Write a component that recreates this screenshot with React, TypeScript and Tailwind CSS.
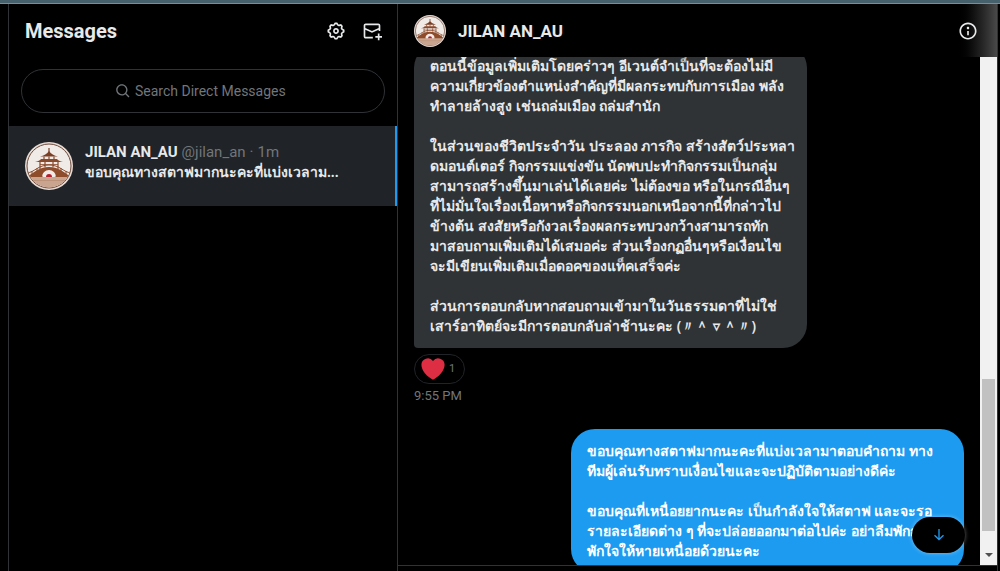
import { ReactNode } from "react";

const INCOMING = [
  "ตอนนี้ข้อมูลเพิ่มเติมโดยคร่าวๆ อีเวนต์จำเป็นที่จะต้องไม่มี",
  "ความเกี่ยวข้องตำแหน่งสำคัญที่มีผลกระทบกับการเมือง พลัง",
  "ทำลายล้างสูง เช่นถล่มเมือง ถล่มสำนัก",
  "",
  "ในส่วนของชีวิตประจำวัน ประลอง ภารกิจ สร้างสัตว์ประหลา",
  "ดมอนต์เตอร์ กิจกรรมแข่งขัน นัดพบปะทำกิจกรรมเป็นกลุ่ม",
  "สามารถสร้างขึ้นมาเล่นได้เลยค่ะ ไม่ต้องขอ หรือในกรณีอื่นๆ",
  "ที่ไม่มั่นใจเรื่องเนื้อหาหรือกิจกรรมนอกเหนือจากนี้ที่กล่าวไป",
  "ข้างต้น สงสัยหรือกังวลเรื่องผลกระทบวงกว้างสามารถทัก",
  "มาสอบถามเพิ่มเติมได้เสมอค่ะ ส่วนเรื่องกฏอื่นๆหรือเงื่อนไข",
  "จะมีเขียนเพิ่มเติมเมื่อดอคของแท็คเสร็จค่ะ",
  "",
  "ส่วนการตอบกลับหากสอบถามเข้ามาในวันธรรมดาที่ไม่ใช่",
  "เสาร์อาทิตย์จะมีการตอบกลับล่าช้านะคะ (〃＾ ▿ ＾〃)",
];

const OUTGOING = [
  "ขอบคุณทางสตาฟมากนะคะที่แบ่งเวลามาตอบคำถาม ทาง",
  "ทีมผู้เล่นรับทราบเงื่อนไขและจะปฏิบัติตามอย่างดีค่ะ",
  "",
  "ขอบคุณที่เหนื่อยยากนะคะ เป็นกำลังใจให้สตาฟ และจะรอ",
  "รายละเอียดต่าง ๆ ที่จะปล่อยออกมาต่อไปค่ะ อย่าลืมพักกาย",
  "พักใจให้หายเหนื่อยด้วยนะคะ",
];

const ICONS = {
  settings:
    "M10.54 1.75h2.92l1.57 2.36c.11.17.32.25.53.21l2.53-.59 2.17 2.17-.58 2.54c-.05.2.04.41.21.53l2.36 1.57v2.92l-2.36 1.57c-.17.12-.26.33-.21.53l.58 2.54-2.17 2.17-2.53-.59c-.21-.04-.42.04-.53.21l-1.57 2.36h-2.92l-1.58-2.36c-.11-.17-.32-.25-.52-.21l-2.54.59-2.17-2.17.58-2.54c.05-.2-.03-.41-.21-.53l-2.35-1.57v-2.92L4.1 8.97c.18-.12.26-.33.21-.53L3.73 5.9 5.9 3.73l2.54.59c.2.04.41-.04.52-.21l1.58-2.36zm1.07 2l-.98 1.47C10.05 6.08 9 6.5 7.99 6.27l-1.46-.34-.6.6.33 1.46c.24 1.01-.18 2.07-1.05 2.64l-1.46.98v.78l1.46.98c.87.57 1.29 1.63 1.05 2.64l-.33 1.46.6.6 1.46-.34c1.01-.23 2.06.19 2.64 1.05l.98 1.47h.78l.97-1.47c.58-.86 1.63-1.28 2.65-1.05l1.45.34.61-.6-.34-1.46c-.23-1.01.18-2.07 1.05-2.64l1.47-.98v-.78l-1.47-.98c-.87-.57-1.28-1.63-1.05-2.64l.34-1.46-.61-.6-1.45.34c-1.02.23-2.07-.19-2.65-1.05l-.97-1.47h-.78zM12 10.5c-.83 0-1.5.67-1.5 1.5s.67 1.5 1.5 1.5c.82 0 1.5-.67 1.5-1.5s-.68-1.5-1.5-1.5zM8.5 12c0-1.93 1.56-3.5 3.5-3.5 1.93 0 3.5 1.57 3.5 3.5s-1.57 3.5-3.5 3.5c-1.94 0-3.5-1.57-3.5-3.5z",
  compose:
    "M1.998 5.5c0-1.381 1.119-2.5 2.5-2.5h15c1.381 0 2.5 1.119 2.5 2.5V12h-2v-1.537l-8 3.635-8-3.635V18.5c0 .276.224.5.5.5H13v2H4.498c-1.381 0-2.5-1.119-2.5-2.5v-13zm2 2.766l8 3.635 8-3.635V5.5c0-.276-.224-.5-.5-.5h-15c-.276 0-.5.224-.5.5v2.766zM19 18v-3h2v3h3v2h-3v3h-2v-3h-3v-2h3z",
  search:
    "M10.25 3.75c-3.59 0-6.5 2.91-6.5 6.5s2.91 6.5 6.5 6.5c1.795 0 3.419-.726 4.596-1.904 1.178-1.177 1.904-2.801 1.904-4.596 0-3.59-2.91-6.5-6.5-6.5zm-8.5 6.5c0-4.694 3.806-8.5 8.5-8.5s8.5 3.806 8.5 8.5c0 1.986-.682 3.815-1.824 5.262l4.781 4.781-1.414 1.414-4.781-4.781c-1.447 1.142-3.276 1.824-5.262 1.824-4.694 0-8.5-3.806-8.5-8.5z",
  info: "M13.5 8.5c0 .83-.67 1.5-1.5 1.5s-1.5-.67-1.5-1.5S11.17 7 12 7s1.5.67 1.5 1.5zM13 17v-5h-2v5h2zm-1 5.25c5.66 0 10.25-4.59 10.25-10.25S17.66 1.75 12 1.75 1.75 6.34 1.75 12 6.34 22.25 12 22.25zM20.25 12c0 4.56-3.69 8.25-8.25 8.25S3.75 16.56 3.75 12 7.44 3.75 12 3.75s8.25 3.69 8.25 8.25z",
  arrowDown:
    "M13 3v13.59l5.043-5.05 1.414 1.42L12 20.41l-7.457-7.45 1.414-1.42L11 16.59V3h2z",
};

function Icon({ name, className }: { name: keyof typeof ICONS; className: string }) {
  return (
    <svg viewBox="0 0 24 24" fill="currentColor" aria-hidden="true" className={className}>
      <path d={ICONS[name]} />
    </svg>
  );
}

function Avatar({ className }: { className: string }) {
  return (
    <svg viewBox="0 0 48 48" role="img" aria-label="JILAN AN_AU" className={className}>
      <defs>
        <clipPath id="disc">
          <circle cx="24" cy="24" r="21.5" />
        </clipPath>
      </defs>
      <circle cx="24" cy="24" r="24" fill="#e9dcd4" />
      <circle cx="24" cy="24" r="22" fill="#f1ebe8" stroke="#6b4a3c" strokeWidth="1" />
      <g clipPath="url(#disc)">
        <rect y="34" width="48" height="14" fill="#c9a58f" />
        <path d="M6 38.500h36" stroke="#b98d75" strokeWidth="0.8" />
        <path d="M0 35c7-1 11-10 24-10s17 9 24 10H31a7 7 0 0 0-14 0z" fill="#8f4c2a" />
        <path d="M2 31c8-1 11-8 22-8s14 7 22 8" fill="none" stroke="#8a4a2b" strokeWidth="1" />
        <path d="M7 29v4M12 26v4M36 26v4M41 29v4" stroke="#8a4a2b" strokeWidth="1" />
        <path d="M18 35a6 6 0 0 1 12 0z" fill="#f1ebe8" />
        <path d="M21 35a3 3 0 0 1 6 0z" fill="#b3202c" />
      </g>
      <path d="M24 6v4" stroke="#7a3f25" strokeWidth="1.2" />
      <path d="M15 14.500c4-1 7-2.500 9-5.500 2 3 5 4.500 9 5.500z" fill="#7a3f25" />
      <path d="M10 20c3-.5 5-1.600 6-3h16c1 1.400 3 2.500 6 3z" fill="#8a4a2b" />
      <path
        d="M19 14.500v3M24 14.500v3M29 14.500v3M15 20v7M20 20v5M28 20v5M33 20v7"
        stroke="#8a4a2b"
        strokeWidth="1.2"
      />
      <path d="M15 22.500h18" stroke="#8a4a2b" strokeWidth="0.8" />
    </svg>
  );
}

function Bubble({ lines, className }: { lines: string[]; className: string }) {
  return (
    <p
      lang="th"
      className={`w-[393px] max-w-full overflow-hidden whitespace-pre px-4 py-3 font-['Noto_Sans',sans-serif] text-sm leading-5 font-semibold ${className}`}
    >
      {lines.join("\n")}
    </p>
  );
}

function IconButton({ label, children }: { label: string; children: ReactNode }) {
  return (
    <button type="button" aria-label={label} className="flex items-center justify-center">
      {children}
    </button>
  );
}

function Inbox() {
  return (
    <section className="flex w-[390px] shrink-0 flex-col border-x border-[#2f3336]">
      <header className="flex h-[53px] items-center justify-between pr-[15px] pl-4">
        <h1 className="text-xl leading-6 font-bold">Messages</h1>
        <div className="flex gap-4">
          <IconButton label="Settings">
            <Icon name="settings" className="size-5" />
          </IconButton>
          <IconButton label="New message">
            <Icon name="compose" className="size-5" />
          </IconButton>
        </div>
      </header>
      <div className="px-3 pt-3 pb-[13px]">
        <label className="flex h-11 items-center justify-center gap-1 rounded-full border border-[#2f3336] text-[#71767b]">
          <Icon name="search" className="size-4" />
          <input
            type="text"
            aria-label="Search Direct Messages"
            placeholder="Search Direct Messages"
            className="w-[156px] bg-transparent text-sm outline-none placeholder:text-[#71767b]"
          />
        </label>
      </div>
      <a href="#jilan_an" className="flex h-20 gap-3 border-r-2 border-[#1d9bf0] bg-[#202327] p-4">
        <Avatar className="size-12 shrink-0" />
        <div className="min-w-0 leading-5">
          <div className="flex gap-1 text-[15px] whitespace-nowrap text-[#71767b]">
            <span className="font-bold text-[#e7e9ea]">JILAN AN_AU</span>
            <span>@jilan_an</span>
            <span>·</span>
            <span>1m</span>
          </div>
          <div lang="th" className="font-['Noto_Sans',sans-serif] text-sm font-semibold whitespace-nowrap">
            ขอบคุณทางสตาฟมากนะคะที่แบ่งเวลาม...
          </div>
        </div>
      </a>
    </section>
  );
}

function Scrollbar() {
  return (
    <div aria-hidden="true" className="flex w-[17px] shrink-0 flex-col items-center bg-[#f1f1f1] px-0.5">
      <div className="grow-[322] basis-0" />
      <div className="w-full grow-[152] basis-0 bg-[#c1c1c1]" />
      <div className="grow-[22] basis-0" />
      <svg viewBox="0 0 8 4" className="mb-2 h-1 w-2 shrink-0">
        <path d="M0 0h8L4 4z" fill="#505050" />
      </svg>
    </div>
  );
}

function Conversation() {
  return (
    <section className="flex min-w-0 flex-1 flex-col border-r border-[#2f3336]">
      <header className="z-10 flex h-[53px] shrink-0 items-center gap-3 bg-linear-to-r from-black from-93% to-[#4a4a4a] pr-[19px] pl-4">
        <Avatar className="size-8" />
        <h2 className="flex-1 text-[17px] leading-6 font-bold">JILAN AN_AU</h2>
        <IconButton label="Conversation info">
          <Icon name="info" className="size-5" />
        </IconButton>
      </header>
      <div className="relative flex min-h-0 flex-1 overflow-hidden border-b border-[#2f3336]">
        <div className="-mt-[13px] flex min-w-0 flex-1 flex-col px-4">
          <Bubble lines={INCOMING} className="shrink-0 rounded-3xl rounded-bl-sm bg-[#2f3336]" />
          <button
            type="button"
            className="mt-1.5 flex h-[30px] w-[51px] shrink-0 items-center gap-1 rounded-full border border-[#202327] pl-1.5 text-[11px] text-[#71767b]"
          >
            <svg viewBox="0 0 24 22" aria-hidden="true" className="h-[22px] w-6">
              <path
                d="M23.600 6.800A6.400 6.400 0 0 0 12 3.100 6.400 6.400 0 0 0 .4 6.800C.4 13 6.500 19 12 21.800 17.500 19 23.600 13 23.600 6.800z"
                fill="#dd2e44"
              />
            </svg>
            1
          </button>
          <time className="mt-0.5 text-[13px] leading-5 text-[#71767b]">9:55 PM</time>
          <Bubble lines={OUTGOING} className="mt-[23px] shrink-0 self-end rounded-3xl bg-[#1d9bf0] text-white" />
        </div>
        <Scrollbar />
        <button
          type="button"
          aria-label="Scroll to latest"
          className="absolute right-8 bottom-3 flex h-9 w-[53px] items-center justify-center rounded-full bg-black text-[#1d9bf0] shadow-[0_0_4px_rgba(255,255,255,0.4)]"
        >
          <Icon name="arrowDown" className="size-4" />
        </button>
      </div>
      <div className="h-[5px] shrink-0" />
    </section>
  );
}

export default function App() {
  return (
    <div className="flex h-screen flex-col bg-black font-[Roboto,sans-serif] text-[#e7e9ea]">
      <div className="h-1 shrink-0 border-b border-[#7d8d94] bg-[#46606c]" />
      <main className="flex min-h-0 flex-1 pr-0.5 pl-2">
        <Inbox />
        <Conversation />
      </main>
    </div>
  );
}
